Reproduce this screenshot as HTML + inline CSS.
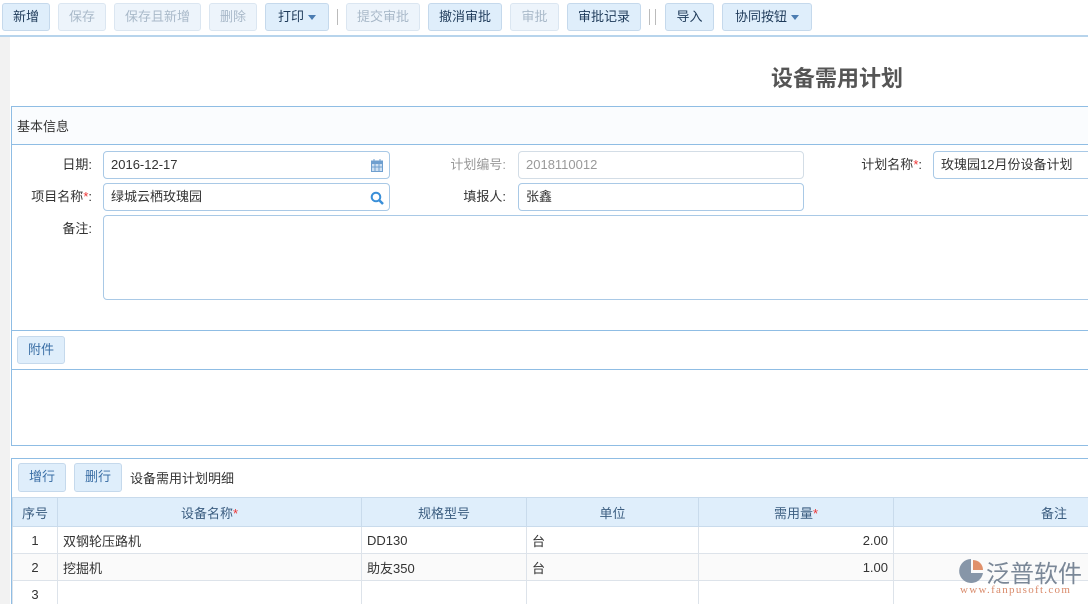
<!DOCTYPE html>
<html><head><meta charset="utf-8"><style>
*{box-sizing:border-box;margin:0;padding:0}
html,body{width:1088px;height:604px;overflow:hidden}
body{background:#fff;font-family:"Liberation Sans","Noto Sans CJK SC",sans-serif;font-size:13px;color:#333;position:relative}
.abs{position:absolute;white-space:nowrap}
.btn{position:absolute;top:3px;height:28px;border:1px solid #c5d9ec;border-radius:3px;background:#dfeefb;color:#1f3b5a;font-size:13px;line-height:26px;text-align:center}
.btn.dis{background:#edf4fb;color:#a9b9c9;border-color:#dbe6f1}
.tri{display:inline-block;width:0;height:0;border-left:4px solid transparent;border-right:4px solid transparent;border-top:5px solid #4b7cb1;vertical-align:middle;margin-left:4px}
.sep{position:absolute;top:9px;width:1px;height:16px;background:#bbb}
.lbl{position:absolute;text-align:right;font-size:13px;color:#333}
.inp{position:absolute;height:28px;border:1px solid #a9c9e6;border-radius:4px;background:#fff;padding-left:7px;line-height:26px;font-size:13px}
.red{color:#e33}
table{border-collapse:collapse;position:absolute;left:12px;top:497px;table-layout:fixed;width:1120px}
td,th{border:1px solid #dde3ea;height:27px;font-size:13px;font-weight:normal;padding:0 5px}
th{background:#dfeefb;color:#3b5d80;border-color:#c9dbec;height:29px}
</style></head><body>
<div class="abs" style="left:0;top:36px;width:10px;height:568px;background:#f2f2f2"></div>
<div class="abs" style="left:0;top:35px;width:1088px;height:2px;background:#b7d4ec"></div>
<div class="btn" style="left:2px;width:48px">新增</div>
<div class="btn dis" style="left:58px;width:48px">保存</div>
<div class="btn dis" style="left:114px;width:87px">保存且新增</div>
<div class="btn dis" style="left:209px;width:48px">删除</div>
<div class="btn" style="left:265px;width:64px">打印<span class="tri"></span></div>
<div class="sep" style="left:337px"></div>
<div class="btn dis" style="left:346px;width:74px">提交审批</div>
<div class="btn" style="left:428px;width:74px">撤消审批</div>
<div class="btn dis" style="left:510px;width:49px">审批</div>
<div class="btn" style="left:567px;width:74px">审批记录</div>
<div class="sep" style="left:649px"></div><div class="sep" style="left:655px"></div>
<div class="btn" style="left:665px;width:49px">导入</div>
<div class="btn" style="left:722px;width:90px">协同按钮<span class="tri"></span></div>

<div class="abs" style="left:771px;top:61px;font-size:22px;font-weight:bold;color:#555">设备需用计划</div>

<div class="abs" style="left:11px;top:106px;width:1090px;height:340px;border:1px solid #8fbde4;background:#fff"></div>
<div class="abs" style="left:12px;top:107px;width:1076px;height:38px;background:#fafcfe;border-bottom:1px solid #8fbde4"></div>
<div class="abs" style="left:17px;top:116px">基本信息</div>
<div class="lbl" style="left:20px;width:72px;top:154px">日期:</div>
<div class="inp" style="left:103px;top:151px;width:287px">2016-12-17<svg class="abs" style="right:6px;top:7px" width="12" height="13" viewBox="0 0 12 13"><rect x="0.5" y="2" width="11" height="10.5" fill="#cfe0f2" stroke="#6f9fcf"/><rect x="0.5" y="2" width="11" height="3" fill="#6f9fcf"/><path d="M3 0v3M9 0v3M0 8h12M4 5v8M8 5v8" stroke="#6f9fcf"/></svg></div>
<div class="lbl" style="left:10px;width:82px;top:186px">项目名称<span class="red">*</span>:</div>
<div class="inp" style="left:103px;top:183px;width:287px">绿城云栖玫瑰园<svg class="abs" style="right:5px;top:7px" width="14" height="14" viewBox="0 0 14 14"><circle cx="6" cy="6" r="4.3" fill="none" stroke="#3a8fd8" stroke-width="2"/><path d="M9 9l4 4" stroke="#3a8fd8" stroke-width="2.5"/></svg></div>
<div class="lbl" style="left:20px;width:72px;top:218px">备注:</div>
<div class="inp" style="left:103px;top:215px;width:990px;height:85px"></div>
<div class="lbl" style="left:430px;width:76px;top:154px;color:#999">计划编号:</div>
<div class="inp" style="left:518px;top:151px;width:286px;color:#999;border-color:#d3dde6">2018110012</div>
<div class="lbl" style="left:430px;width:76px;top:186px">填报人:</div>
<div class="inp" style="left:518px;top:183px;width:286px">张鑫</div>
<div class="lbl" style="left:840px;width:82px;top:154px">计划名称<span class="red">*</span>:</div>
<div class="inp" style="left:933px;top:151px;width:160px">玫瑰园12月份设备计划</div>
<div class="abs" style="left:12px;top:330px;width:1076px;height:1px;background:#8fbde4"></div>
<div class="abs" style="left:12px;top:369px;width:1076px;height:1px;background:#8fbde4"></div>
<div class="btn" style="left:17px;top:336px;width:48px;color:#3a6ea5">附件</div>

<div class="abs" style="left:11px;top:458px;width:1090px;height:160px;border:1px solid #8fbde4;background:#fff"></div>
<div class="btn" style="left:18px;top:463px;width:48px;height:29px;color:#3a6ea5">增行</div>
<div class="btn" style="left:74px;top:463px;width:48px;height:29px;color:#3a6ea5">删行</div>
<div class="abs" style="left:130px;top:468px">设备需用计划明细</div>
<table>
<colgroup><col style="width:45px"><col style="width:304px"><col style="width:165px"><col style="width:172px"><col style="width:195px"><col style="width:239px"></colgroup>
<tr><th>序号</th><th>设备名称<span class="red">*</span></th><th>规格型号</th><th>单位</th><th>需用量<span class="red">*</span></th><th style="text-align:left;padding-left:147px">备注</th></tr>
<tr><td style="text-align:center">1</td><td>双钢轮压路机</td><td>DD130</td><td>台</td><td style="text-align:right">2.00</td><td></td></tr>
<tr style="background:#fafafa"><td style="text-align:center">2</td><td>挖掘机</td><td>助友350</td><td>台</td><td style="text-align:right">1.00</td><td></td></tr>
<tr><td style="text-align:center">3</td><td></td><td></td><td></td><td></td><td></td></tr>
</table>
<svg class="abs" style="left:957px;top:557px" width="28" height="28" viewBox="0 0 28 28"><path d="M14 2A12 12 0 1 0 26 16H14z" fill="#8796a8"/><path d="M16 3a10 10 0 0 1 10 10h-10z" fill="#e0906a"/></svg>
<div class="abs" style="left:986px;top:554px;font-size:24px;color:#7a8797">泛普软件</div>
<div class="abs" style="left:960px;top:584px;font-size:11px;color:#d98a6a;font-family:'Liberation Serif',serif;letter-spacing:1.3px">www.fanpusoft.com</div>
</body></html>
